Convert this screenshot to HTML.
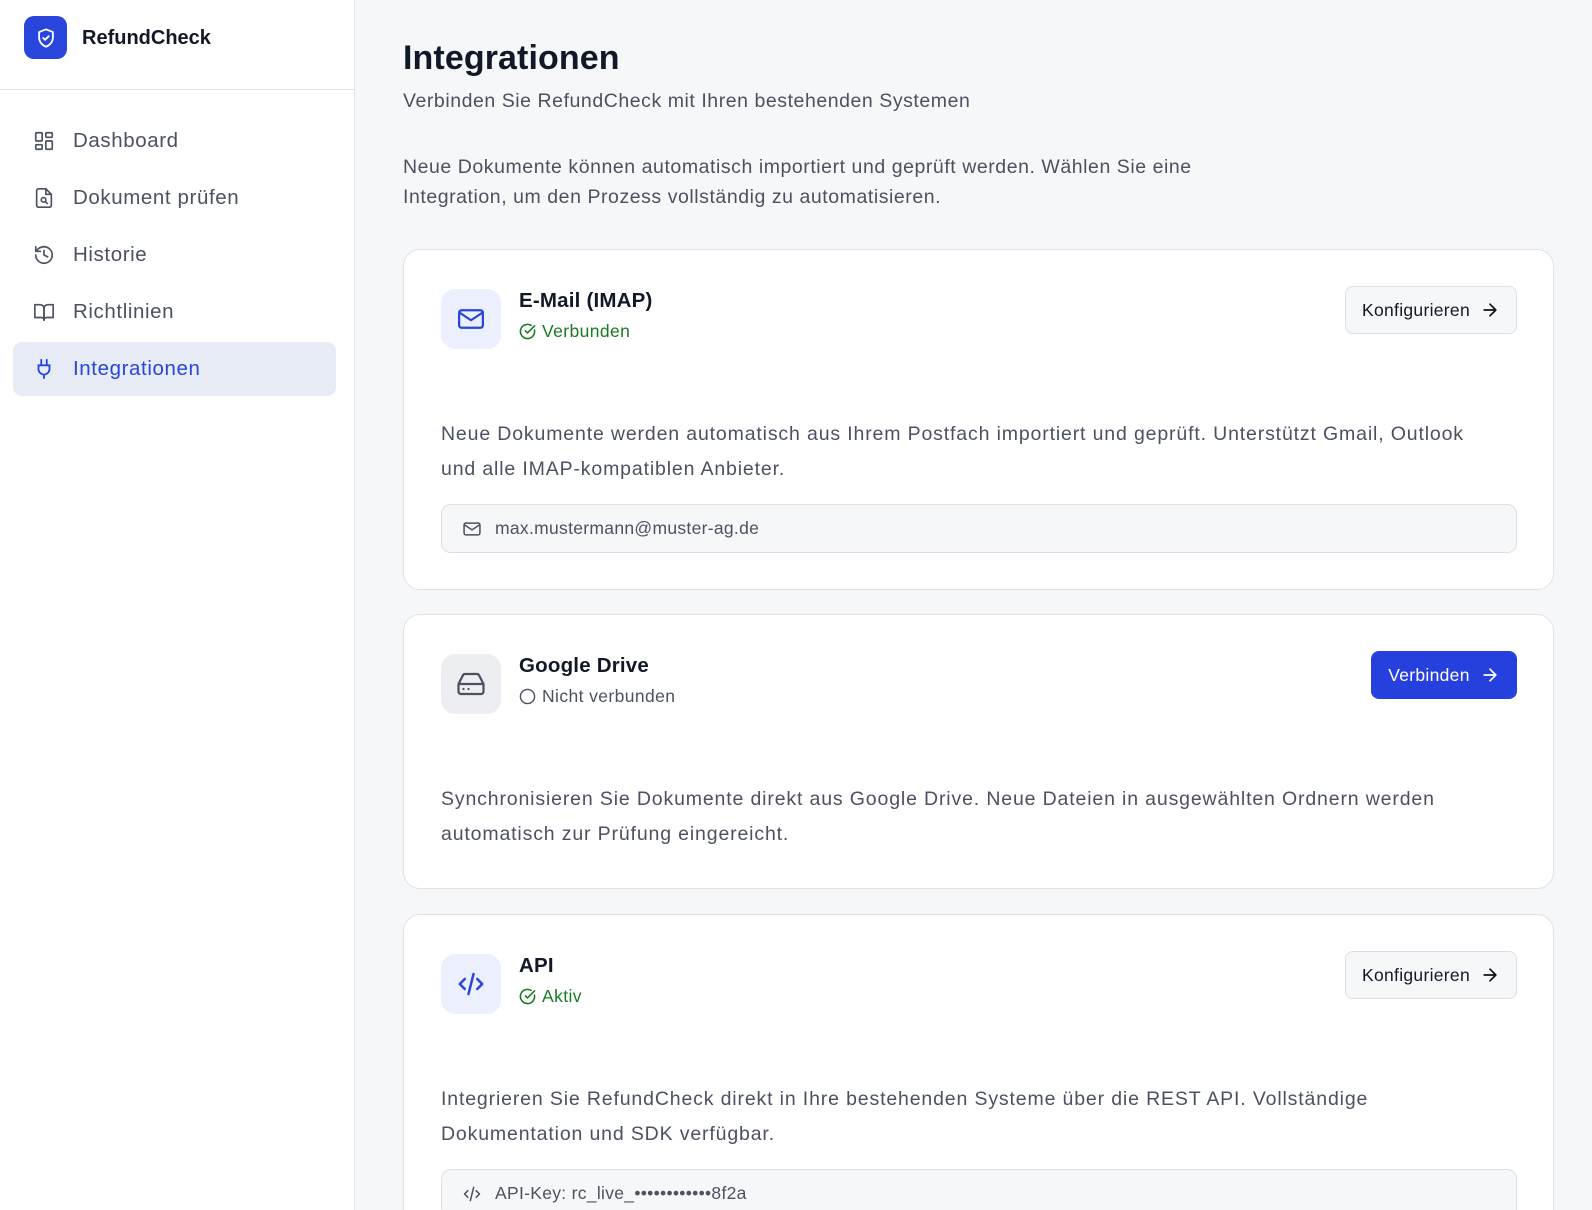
<!DOCTYPE html>
<html><head><meta charset="utf-8"><style>
*{box-sizing:border-box;margin:0;padding:0}
html,body{width:1592px;height:1210px;overflow:hidden}
body{background:#f6f7f9;font-family:"Liberation Sans",sans-serif;color:#111827;position:relative}
#wrap{position:absolute;left:0;top:0;width:1592px;height:1210px;overflow:hidden}
.side{position:absolute;left:0;top:0;width:355px;height:1210px;background:#fff;border-right:1px solid #e2e4e8}
.hdr{height:90px;border-bottom:1px solid #dfe1e5;position:relative}
.logo{position:absolute;left:24px;top:16px;width:43px;height:43px;border-radius:10px;background:#2845dc;display:flex;align-items:center;justify-content:center}
.brand{position:absolute;left:82px;top:27px;font-size:20px;font-weight:bold;letter-spacing:0px}
.nav{position:absolute;left:13px;width:323px;height:54px;border-radius:9px;display:flex;align-items:center;font-size:20.5px;color:#4b5160;letter-spacing:0.6px}
.nav svg{position:absolute;left:20px}
.nav span{position:absolute;left:60px}
.nav.act{background:#e7ebf5;color:#2845dc}
h1{position:absolute;left:403px;top:39px;font-size:34px;font-weight:bold;letter-spacing:0.1px;white-space:nowrap}
.sub{position:absolute;left:403px;top:90px;font-size:19.5px;color:#4b5160;white-space:nowrap;letter-spacing:0.55px}
.intro{position:absolute;left:403px;top:152px;font-size:19.5px;line-height:30px;color:#4b5160;width:840px;letter-spacing:0.55px}
.card{position:absolute;left:403px;width:1151px;background:#fff;border:1px solid #dfe1e5;border-radius:17px}
.ib{position:absolute;left:37px;top:39px;width:60px;height:60px;border-radius:14px;display:flex;align-items:center;justify-content:center}
.t{position:absolute;left:115px;top:39px;font-size:20.5px;font-weight:bold;white-space:nowrap;letter-spacing:0.2px}
.st{position:absolute;left:115px;top:71px;font-size:17.5px;display:flex;align-items:center;gap:6px;white-space:nowrap;letter-spacing:0.4px}
.ok{color:#177a24}
.btn{position:absolute;right:36px;top:36px;height:48px;border-radius:8px;display:flex;align-items:center;gap:10px;padding:0 16px;font-size:17.5px;white-space:nowrap;letter-spacing:0.3px}
.b1{background:#f6f7f9;border:1px solid #dcdfe4;color:#111827}
.b2{background:#2540dc;color:#fff;right:36px;width:146px;justify-content:center}
.d{position:absolute;left:37px;font-size:19.5px;line-height:34.5px;color:#4b5160;width:1050px;letter-spacing:0.85px}
.inp{position:absolute;left:37px;right:36px;height:49px;border:1px solid #dcdfe4;background:#f6f7f9;border-radius:10px;display:flex;align-items:center;gap:13px;padding-left:20px;font-size:17.5px;color:#4b5160;letter-spacing:0.3px}
</style></head><body><div id="wrap">
<div class="side">
 <div class="hdr">
  <div class="logo"><svg width="22" height="22" viewBox="0 0 24 24" fill="none" stroke="#fff" stroke-width="2" stroke-linecap="round" stroke-linejoin="round"><path d="M12 2.5l7.5 3v6c0 4.8-3.3 8.4-7.5 10-4.2-1.6-7.5-5.2-7.5-10v-6z"/><path d="M9 12l2 2 4-4"/></svg></div>
  <div class="brand">RefundCheck</div>
 </div>
 <div class="nav" style="top:114px"><svg width="22" height="22" viewBox="0 0 24 24" fill="none" stroke="#4b5160" stroke-width="1.8"><rect x="3" y="3" width="7" height="9" rx="1"/><rect x="14" y="3" width="7" height="5" rx="1"/><rect x="14" y="12" width="7" height="9" rx="1"/><rect x="3" y="16" width="7" height="5" rx="1"/></svg><span>Dashboard</span></div>
 <div class="nav" style="top:171px"><svg width="22" height="22" viewBox="0 0 24 24" fill="none" stroke="#4b5160" stroke-width="1.8" stroke-linecap="round" stroke-linejoin="round"><path d="M14 2H6a2 2 0 0 0-2 2v16a2 2 0 0 0 2 2h12a2 2 0 0 0 2-2V8z"/><path d="M14 2v6h6"/><circle cx="11.5" cy="14" r="2.5"/><path d="M13.5 16l2 2"/></svg><span>Dokument prüfen</span></div>
 <div class="nav" style="top:228px"><svg width="22" height="22" viewBox="0 0 24 24" fill="none" stroke="#4b5160" stroke-width="1.8" stroke-linecap="round" stroke-linejoin="round"><path d="M3 12a9 9 0 1 0 9-9 9.75 9.75 0 0 0-6.74 2.74L3 8"/><path d="M3 3v5h5"/><path d="M12 7v5l4 2"/></svg><span>Historie</span></div>
 <div class="nav" style="top:285px"><svg width="22" height="22" viewBox="0 0 24 24" fill="none" stroke="#4b5160" stroke-width="1.8" stroke-linejoin="round"><path d="M2 4h6a4 4 0 0 1 4 4v13a3 3 0 0 0-3-3H2z"/><path d="M22 4h-6a4 4 0 0 0-4 4v13a3 3 0 0 1 3-3h7z"/></svg><span>Richtlinien</span></div>
 <div class="nav act" style="top:342px"><svg width="22" height="22" viewBox="0 0 24 24" fill="none" stroke="#2845dc" stroke-width="2" stroke-linecap="round"><path d="M9 2v5M15 2v5M6 8h12v4a6 6 0 0 1-12 0zM12 18v4"/></svg><span>Integrationen</span></div>
</div>

<h1>Integrationen</h1>
<div class="sub">Verbinden Sie RefundCheck mit Ihren bestehenden Systemen</div>
<div class="intro">Neue Dokumente können automatisch importiert und geprüft werden. Wählen Sie eine Integration, um den Prozess vollständig zu automatisieren.</div>

<div class="card" style="top:249px;height:341px">
 <div class="ib" style="background:#eceffd"><svg width="30" height="30" viewBox="0 0 24 24" fill="none" stroke="#2845dc" stroke-width="1.8" stroke-linejoin="round"><rect x="2.5" y="5" width="19" height="14" rx="2"/><path d="M3 7l9 6 9-6"/></svg></div>
 <div class="t">E-Mail (IMAP)</div>
 <div class="st ok"><svg width="17" height="17" viewBox="0 0 24 24" fill="none" stroke="#177a24" stroke-width="2.2" stroke-linecap="round"><path d="M21.8 10A10 10 0 1 1 17 3.3"/><path d="M9 11l3 3L22 4"/></svg>Verbunden</div>
 <div class="btn b1">Konfigurieren <svg width="20" height="20" viewBox="0 0 24 24" fill="none" stroke="#111" stroke-width="2" stroke-linecap="round" stroke-linejoin="round"><path d="M5 12h14M12 5l7 7-7 7"/></svg></div>
 <div class="d" style="top:167px">Neue Dokumente werden automatisch aus Ihrem Postfach importiert und geprüft. Unterstützt Gmail, Outlook und alle IMAP-kompatiblen Anbieter.</div>
 <div class="inp" style="top:254px"><svg width="20" height="20" viewBox="0 0 24 24" fill="none" stroke="#4b5160" stroke-width="1.8"><rect x="2.5" y="5" width="19" height="14" rx="2"/><path d="M3 7l9 6 9-6"/></svg>max.mustermann@muster-ag.de</div>
</div>

<div class="card" style="top:614px;height:275px">
 <div class="ib" style="background:#eceef1"><svg width="30" height="30" viewBox="0 0 24 24" fill="none" stroke="#4b5160" stroke-width="1.8" stroke-linejoin="round"><path d="M22 12H2M5.5 5.1L2 12v6a2 2 0 0 0 2 2h16a2 2 0 0 0 2-2v-6l-3.5-6.9A2 2 0 0 0 16.8 4H7.2a2 2 0 0 0-1.7 1.1z"/><path d="M6 16h.01M10 16h.01" stroke-linecap="round"/></svg></div>
 <div class="t">Google Drive</div>
 <div class="st" style="color:#4b5160"><svg width="17" height="17" viewBox="0 0 24 24" fill="none" stroke="#4b5160" stroke-width="2"><circle cx="12" cy="12" r="10"/></svg>Nicht verbunden</div>
 <div class="btn b2">Verbinden <svg width="20" height="20" viewBox="0 0 24 24" fill="none" stroke="#fff" stroke-width="2" stroke-linecap="round" stroke-linejoin="round"><path d="M5 12h14M12 5l7 7-7 7"/></svg></div>
 <div class="d" style="top:167px">Synchronisieren Sie Dokumente direkt aus Google Drive. Neue Dateien in ausgewählten Ordnern werden automatisch zur Prüfung eingereicht.</div>
</div>

<div class="card" style="top:914px;height:340px">
 <div class="ib" style="background:#eceffd"><svg width="30" height="30" viewBox="0 0 24 24" fill="none" stroke="#2845dc" stroke-width="2" stroke-linecap="round" stroke-linejoin="round"><path d="M7 8l-4 4 4 4M17 8l4 4-4 4M14 4l-4 16"/></svg></div>
 <div class="t">API</div>
 <div class="st ok"><svg width="17" height="17" viewBox="0 0 24 24" fill="none" stroke="#177a24" stroke-width="2.2" stroke-linecap="round"><path d="M21.8 10A10 10 0 1 1 17 3.3"/><path d="M9 11l3 3L22 4"/></svg>Aktiv</div>
 <div class="btn b1">Konfigurieren <svg width="20" height="20" viewBox="0 0 24 24" fill="none" stroke="#111" stroke-width="2" stroke-linecap="round" stroke-linejoin="round"><path d="M5 12h14M12 5l7 7-7 7"/></svg></div>
 <div class="d" style="top:167px">Integrieren Sie RefundCheck direkt in Ihre bestehenden Systeme über die REST API. Vollständige Dokumentation und SDK verfügbar.</div>
 <div class="inp" style="top:254px"><svg width="20" height="20" viewBox="0 0 24 24" fill="none" stroke="#4b5160" stroke-width="1.8" stroke-linecap="round" stroke-linejoin="round"><path d="M7 8l-4 4 4 4M17 8l4 4-4 4M14 4l-4 16"/></svg>API-Key: rc_live_••••••••••••8f2a</div>
</div>
</div></body></html>
